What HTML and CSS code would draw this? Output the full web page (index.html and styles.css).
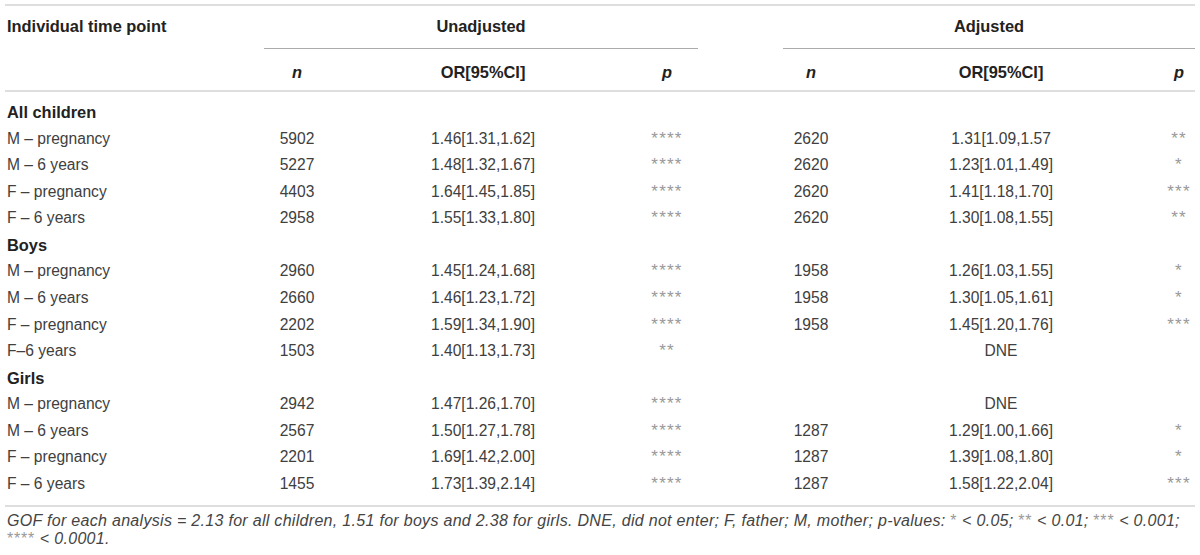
FILE: index.html
```html
<!DOCTYPE html>
<html lang="en">
<head>
<meta charset="utf-8">
<title>Table</title>
<link rel="stylesheet" href="styles.css">
</head>
<body>
<div class="page">
<table class="tbl">
  <colgroup>
    <col class="c-label"><col class="c-n1"><col class="c-or1"><col class="c-p1">
    <col class="c-gap"><col class="c-n2"><col class="c-or2"><col class="c-p2">
  </colgroup>
  <thead>
    <tr class="h1">
      <th class="lbl">Individual time point</th>
      <th colspan="3" class="span">Unadjusted</th>
      <th></th>
      <th colspan="3" class="span">Adjusted</th>
    </tr>
    <tr class="h2">
      <th></th>
      <th><i>n</i></th>
      <th>OR[95%CI]</th>
      <th><i>p</i></th>
      <th></th>
      <th><i>n</i></th>
      <th>OR[95%CI]</th>
      <th><i>p</i></th>
    </tr>
  </thead>
  <tbody>
    <tr class="grp first"><td colspan="8">All children</td></tr>
    <tr><td class="lbl">M – pregnancy</td><td>5902</td><td>1.46[1.31,1.62]</td><td class="st">****</td><td></td><td>2620</td><td>1.31[1.09,1.57</td><td class="st">**</td></tr>
    <tr><td class="lbl">M – 6 years</td><td>5227</td><td>1.48[1.32,1.67]</td><td class="st">****</td><td></td><td>2620</td><td>1.23[1.01,1.49]</td><td class="st">*</td></tr>
    <tr><td class="lbl">F – pregnancy</td><td>4403</td><td>1.64[1.45,1.85]</td><td class="st">****</td><td></td><td>2620</td><td>1.41[1.18,1.70]</td><td class="st">***</td></tr>
    <tr><td class="lbl">F – 6 years</td><td>2958</td><td>1.55[1.33,1.80]</td><td class="st">****</td><td></td><td>2620</td><td>1.30[1.08,1.55]</td><td class="st">**</td></tr>
    <tr class="grp"><td colspan="8">Boys</td></tr>
    <tr><td class="lbl">M – pregnancy</td><td>2960</td><td>1.45[1.24,1.68]</td><td class="st">****</td><td></td><td>1958</td><td>1.26[1.03,1.55]</td><td class="st">*</td></tr>
    <tr><td class="lbl">M – 6 years</td><td>2660</td><td>1.46[1.23,1.72]</td><td class="st">****</td><td></td><td>1958</td><td>1.30[1.05,1.61]</td><td class="st">*</td></tr>
    <tr><td class="lbl">F – pregnancy</td><td>2202</td><td>1.59[1.34,1.90]</td><td class="st">****</td><td></td><td>1958</td><td>1.45[1.20,1.76]</td><td class="st">***</td></tr>
    <tr><td class="lbl">F–6 years</td><td>1503</td><td>1.40[1.13,1.73]</td><td class="st">**</td><td></td><td></td><td>DNE</td><td></td></tr>
    <tr class="grp"><td colspan="8">Girls</td></tr>
    <tr><td class="lbl">M – pregnancy</td><td>2942</td><td>1.47[1.26,1.70]</td><td class="st">****</td><td></td><td></td><td>DNE</td><td></td></tr>
    <tr><td class="lbl">M – 6 years</td><td>2567</td><td>1.50[1.27,1.78]</td><td class="st">****</td><td></td><td>1287</td><td>1.29[1.00,1.66]</td><td class="st">*</td></tr>
    <tr><td class="lbl">F – pregnancy</td><td>2201</td><td>1.69[1.42,2.00]</td><td class="st">****</td><td></td><td>1287</td><td>1.39[1.08,1.80]</td><td class="st">*</td></tr>
    <tr class="last"><td class="lbl">F – 6 years</td><td>1455</td><td>1.73[1.39,2.14]</td><td class="st">****</td><td></td><td>1287</td><td>1.58[1.22,2.04]</td><td class="st">***</td></tr>
  </tbody>
</table>
<p class="note">GOF for each analysis = 2.13 for all children, 1.51 for boys and 2.38 for girls. DNE, did not enter; F, father; M, mother; p-values: <span class="ast">*</span> &lt; 0.05; <span class="ast">**</span> &lt; 0.01; <span class="ast">***</span> &lt; 0.001; <span class="ast">****</span> &lt; 0.0001.</p>
</div>
</body>
</html>
```

FILE: styles.css
```css
html, body {
  margin: 0;
  padding: 0;
  background: #ffffff;
}
body {
  font-family: "Liberation Sans", Arial, sans-serif;
  color: #404040;
}
.page {
  padding: 4px 5px 0 5px;
}
.tbl {
  width: 1190px;
  table-layout: fixed;
  border-collapse: separate;
  border-spacing: 0;
  border-top: 2px solid #dedede;
  border-bottom: 2px solid #dedede;
  font-size: 15.6px;
}
.c-label { width: 259px; }
.c-n1 { width: 66px; }
.c-or1 { width: 306px; }
.c-p1 { width: 62px; }
.c-gap { width: 85px; }
.c-n2 { width: 56px; }
.c-or2 { width: 324px; }
.c-p2 { width: 32px; }

th, td {
  padding: 0;
  text-align: center;
  white-space: nowrap;
}
th {
  font-weight: bold;
  font-size: 16.4px;
  color: #222;
}
.h1 th {
  line-height: 40px;
  padding-bottom: 2px;
  border-bottom: 1px solid transparent;
}
.h1 th.span {
  border-bottom-color: #ababab;
}
.h2 th {
  line-height: 20px;
  padding: 13px 0 8px;
  border-bottom: 2px solid #dedede;
}
th.lbl, td.lbl {
  text-align: left;
  padding-left: 2px;
}
td {
  line-height: 26.57px;
}
.grp td {
  text-align: left;
  padding-left: 2px;
  font-weight: bold;
  font-size: 16.4px;
  color: #222;
}
.first td {
  padding-top: 7px;
}
.last td {
  padding-bottom: 8px;
}
td.st {
  color: #999;
  font-size: 17px;
  letter-spacing: 1.2px;
}
.note {
  margin: 5px 0 0 2px;
  font-size: 16px;
  line-height: 18px;
  letter-spacing: 0.3px;
  font-style: italic;
  color: #444;
  width: 1188px;
}
.note .ast {
  font-style: normal;
  color: #999;
  font-size: 16px;
  letter-spacing: 0.8px;
}
```
